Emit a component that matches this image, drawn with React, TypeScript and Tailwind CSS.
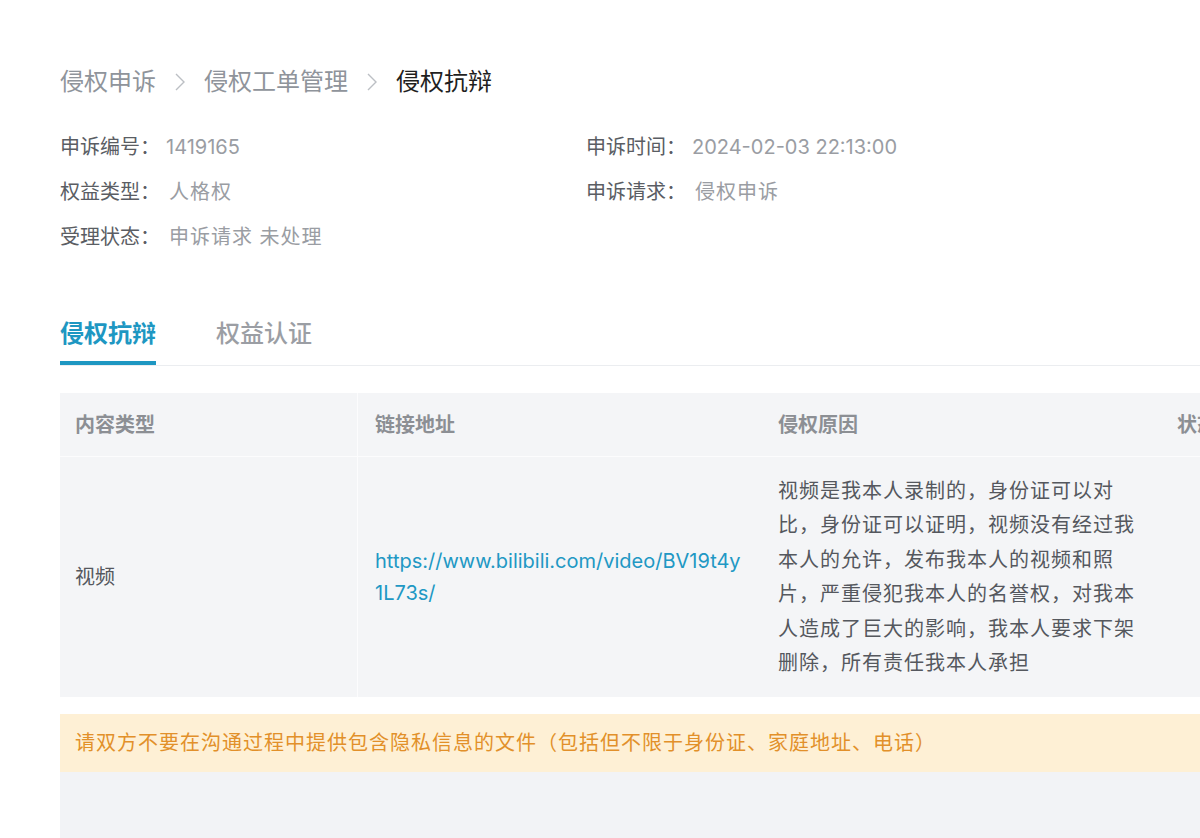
const font = "font-['Inter','Noto_Sans_CJK_SC',sans-serif]";

const info = [
  [
    ["申诉编号", "1419165"],
    ["申诉时间", "2024-02-03 22:13:00"],
  ],
  [
    ["权益类型", "人格权"],
    ["申诉请求", "侵权申诉"],
  ],
  [["受理状态", "申诉请求 未处理"]],
];

function Chevron() {
  return (
    <svg width="12" height="20" viewBox="0 0 12 20" className="mx-[18px]">
      <path d="M2 2 L10 10 L2 18" fill="none" stroke="#bcbfc4" strokeWidth="1.4" />
    </svg>
  );
}

export default function App() {
  return (
    <div className={`w-[1200px] h-[838px] overflow-hidden bg-white ${font}`}>
      <div className="w-[1400px] pl-[60px] pt-[64px]">
        {/* breadcrumb */}
        <div className="flex items-center h-[36px] text-[24px]">
          <span className="text-[#8f949b]">侵权申诉</span>
          <Chevron />
          <span className="text-[#8f949b]">侵权工单管理</span>
          <Chevron />
          <span className="text-[#1f1f1f]">侵权抗辩</span>
        </div>

        {/* info */}
        <div className="mt-[24px]">
          {info.map((row, i) => (
            <div key={i} className="flex h-[45px] items-center text-[20px]">
              {row.map(([label, value]) => (
                <div key={label} className="w-[526px] flex items-center">
                  <span className="text-[#5a5d63]">{label}：</span>
                  <span
                    className={
                      /\d/.test(value)
                        ? "ml-[6px] text-[#9a9da3]"
                        : "ml-[9px] tracking-[1px] text-[#9a9da3]"
                    }
                  >
                    {value}
                  </span>
                </div>
              ))}
            </div>
          ))}
        </div>

        {/* tabs */}
        <div className="mt-[57px] flex gap-[60px] border-b border-[#ebedf0]">
          <div className="flex flex-col">
            <span className="text-[24px] leading-[36px] font-bold text-[#1e97c2]">侵权抗辩</span>
            <div className="mt-[9px] h-[4px] bg-[#1e97c2]" />
          </div>
          <div className="flex flex-col">
            <span className="text-[24px] leading-[36px] font-medium text-[#9b9ea4]">权益认证</span>
          </div>
        </div>

        {/* table */}
        <div className="mt-[27px] bg-[#f4f5f7]">
          <div className="flex h-[64px] items-center text-[20px] font-bold text-[#8c8f94] border-b border-white/70">
            <div className="w-[298px] h-full flex items-center pl-[15px] border-r border-white/70">内容类型</div>
            <div className="w-[400px] h-full flex items-center pl-[17px]">链接地址</div>
            <div className="w-[400px] h-full flex items-center pl-[20px]">侵权原因</div>
            <div className="h-full flex items-center pl-[19px]">状态</div>
          </div>
          <div className="flex text-[20px] text-[#55585e]">
            <div className="w-[298px] flex items-center pl-[15px] border-r border-white/70">视频</div>
            <div className="w-[400px] flex items-center pl-[17px] pr-[12px]">
              <a className="text-[#2198c4] leading-[32px] break-all">
                https://www.bilibili.com/video/BV19t4y1L73s/
              </a>
            </div>
            <div className="w-[400px] px-[20px] py-[17px] leading-[34.4px] tracking-[1px]">
              视频是我本人录制的，身份证可以对比，身份证可以证明，视频没有经过我本人的允许，发布我本人的视频和照片，严重侵犯我本人的名誉权，对我本人造成了巨大的影响，我本人要求下架删除，所有责任我本人承担
            </div>
            <div className="flex-1" />
          </div>
        </div>

        {/* notice */}
        <div className="mt-[17px] h-[58px] flex items-center pl-[15px] bg-[#fef0d5] text-[20px] tracking-[1px] text-[#e2902a]">
          请双方不要在沟通过程中提供包含隐私信息的文件（包括但不限于身份证、家庭地址、电话）
        </div>
        <div className="h-[80px] bg-[#f2f3f6]" />
      </div>
    </div>
  );
}
